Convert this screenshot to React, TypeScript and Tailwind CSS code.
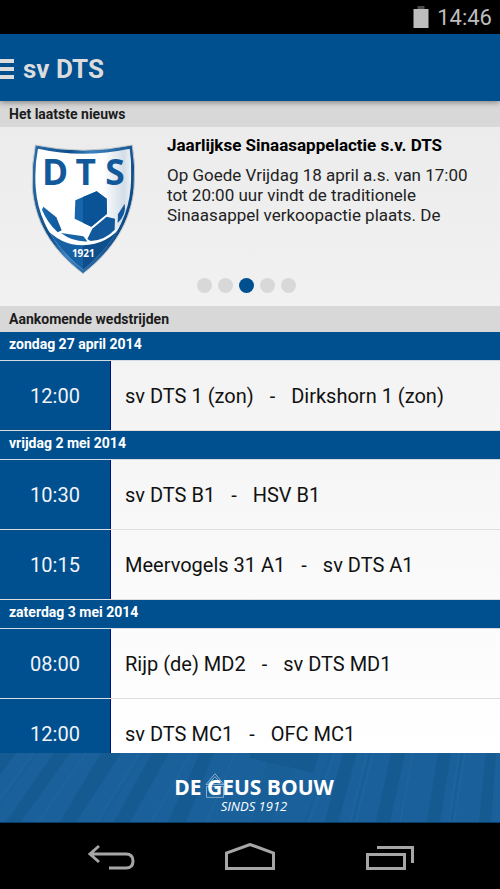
import React from "react";

type Match = { time: string; home: string; away: string };
type MatchDay = { date: string; matches: Match[] };

const days: MatchDay[] = [
  {
    date: "zondag 27 april 2014",
    matches: [{ time: "12:00", home: "sv DTS 1 (zon)", away: "Dirkshorn 1 (zon)" }],
  },
  {
    date: "vrijdag 2 mei 2014",
    matches: [
      { time: "10:30", home: "sv DTS B1", away: "HSV B1" },
      { time: "10:15", home: "Meervogels 31 A1", away: "sv DTS A1" },
    ],
  },
  {
    date: "zaterdag 3 mei 2014",
    matches: [
      { time: "08:00", home: "Rijp (de) MD2", away: "sv DTS MD1" },
      { time: "12:00", home: "sv DTS MC1", away: "OFC MC1" },
    ],
  },
];

function StatusBar() {
  return (
    <div className="flex h-[34px] shrink-0 items-end justify-end gap-2 bg-black pr-2 text-[#bebebe]">
      <svg width="16" height="24" viewBox="0 0 16 24" className="mb-1" aria-hidden="true">
        <rect x="4.500" y="0" width="7" height="3" fill="#4a4a4a" />
        <rect x="0.5" y="3" width="15" height="19" fill="#bebebe" />
      </svg>
      <span className="text-[22px] leading-8">14:46</span>
    </div>
  );
}

function Header() {
  return (
    <header className="z-10 flex h-[67px] shrink-0 items-center gap-2 bg-[#004f8f] pt-[2px] text-[#dcdcdc] shadow-[0_1px_6px_rgba(0,0,0,0.45)]">
      <button type="button" aria-label="Menu" className="flex w-[15px] flex-col gap-1">
        <span className="h-1 w-[14px] bg-current" />
        <span className="h-1 w-[14px] bg-current" />
        <span className="h-1 w-[14px] bg-current" />
      </button>
      <h1 className="text-[26px] leading-8 font-bold">sv DTS</h1>
    </header>
  );
}

function SectionTitle({ children }: { children: React.ReactNode }) {
  return (
    <h2 className="shrink-0 bg-[#d8d8d8] px-[9px] text-sm leading-[26px] font-bold text-[#1c1c1c]">
      {children}
    </h2>
  );
}

function ClubLogo() {
  return (
    <svg
      width="107"
      height="132"
      viewBox="60 39 321 396"
      role="img"
      aria-label="DTS 1921"
      className="shrink-0"
    >
      <defs>
        <linearGradient id="rim" x1="0" y1="0" x2="1" y2="0.3">
          <stop offset="0" stopColor="#2d6ea7" />
          <stop offset="0.35" stopColor="#0e4e8c" />
          <stop offset="0.55" stopColor="#3b83c0" />
          <stop offset="1" stopColor="#0d4a86" />
        </linearGradient>
        <linearGradient id="field" x1="0" y1="0" x2="1" y2="0">
          <stop offset="0" stopColor="#ffffff" />
          <stop offset="0.68" stopColor="#ffffff" />
          <stop offset="0.88" stopColor="#d3dde7" />
          <stop offset="1" stopColor="#ffffff" />
        </linearGradient>
        <linearGradient id="ball" x1="0" y1="0" x2="1" y2="0">
          <stop offset="0" stopColor="#1a6ab0" />
          <stop offset="1" stopColor="#0f5799" />
        </linearGradient>
        <clipPath id="inside">
          <path d="M84 56 Q218 86 359 56 Q367 110 362 172 C355 265 309 345 219 419 C127 344 83 265 77 172 Q73 110 84 56Z" />
        </clipPath>
      </defs>
      <path
        d="M76 45 Q218 76 367 45 Q378 110 372 174 C363 271 315 356 219 431 C119 355 74 269 67 174 Q64 107 76 45Z"
        fill="url(#rim)"
        stroke="#c5c8cb"
        strokeWidth="3"
      />
      <g clipPath="url(#inside)">
        <rect x="60" y="40" width="320" height="390" fill="url(#field)" />
        <path d="M103 286 Q151 343 219 343 Q290 342 337 282 L310 345 L219 425 L130 350Z" fill="#1661a4" />
        <path d="M219 343 Q290 342 337 282 L310 345 L219 425Z" fill="#0e4f8b" />
        <path d="M103 286 Q151 343 219 343 Q290 342 337 282" fill="none" stroke="#ffffff" strokeWidth="6" />
        <path d="M196 211 L260 184 L290 206 L291 251 L244 290 L194 266Z" fill="#1766ab" />
        <path d="M219 201 L260 184 L290 206 L291 251 L244 290 L219 278Z" fill="#0b5397" />
        <path d="M100 230 L139 262 L155 301 L143 307 Q112 278 96 239Z" fill="url(#ball)" />
        <path d="M247 296 L290 260 L315 266 L314 299 Q286 330 242 333 L232 327Z" fill="#12599c" />
        <path d="M153 309 L220 319 L232 334 Q188 336 153 309Z" fill="#1763a5" />
        <path d="M344 221 Q350 252 323 279 L324 253Z" fill="#12599c" />
      </g>
      <g fill="#12599c" fontFamily="'Open Sans', sans-serif" fontWeight="700" fontSize="106" textAnchor="middle">
        <text x="135" y="165">D</text>
        <text x="227" y="165">T</text>
        <text x="315" y="165">S</text>
      </g>
      <text
        x="220"
        y="382"
        fill="#ffffff"
        fontFamily="'Open Sans', sans-serif"
        fontWeight="700"
        fontSize="30"
        textAnchor="middle"
      >
        1921
      </text>
    </svg>
  );
}

function News() {
  const active = 2;
  return (
    <section className="flex h-[179px] shrink-0 flex-col">
      <article className="flex flex-1 gap-[30px] px-[30px] pt-2 text-black">
        <div className="pt-2">
          <ClubLogo />
        </div>
        <div className="flex-1">
          <h3 className="text-[17px] leading-5 font-bold">Jaarlijkse Sinaasappelactie s.v. DTS</h3>
          <p className="max-w-[310px] pt-[10px] text-[17px] leading-5 text-[#222]">
            Op Goede Vrijdag 18 april a.s. van 17:00 tot 20:00 uur vindt de traditionele Sinaasappel
            verkoopactie plaats. De
          </p>
        </div>
      </article>
      <div className="flex justify-center gap-[6px] pb-[13px] pr-2">
        {[0, 1, 2, 3, 4].map((i) => (
          <button
            key={i}
            type="button"
            aria-label={`Nieuwsbericht ${i + 1}`}
            className={i === active ? "size-[15px] rounded-full bg-[#004f8f]" : "size-[15px] rounded-full bg-[#d8d8d8]"}
          />
        ))}
      </div>
    </section>
  );
}

function MatchList() {
  return (
    <div className="min-h-0 flex-1 overflow-hidden">
      {days.map((day) => (
        <section key={day.date}>
          <h3 className="h-[29px] border-b border-[#d5dbe3] bg-[#004f8f] px-[9px] text-sm leading-6 font-bold text-white">
            {day.date}
          </h3>
          <ul>
            {day.matches.map((m) => (
              <li key={m.time} className="flex h-[70px] border-b border-[#dedede] text-xl">
                <time className="flex w-[111px] items-center justify-center border-r border-[#00107a] bg-[#004f8f] text-[#f0f4f8]">
                  {m.time}
                </time>
                <div className="flex items-center gap-4 pl-[14px] text-[#111]">
                  <span>{m.home}</span>
                  <span>-</span>
                  <span>{m.away}</span>
                </div>
              </li>
            ))}
          </ul>
        </section>
      ))}
    </div>
  );
}

function Sponsor() {
  return (
    <a
      href="#sponsor"
      aria-label="De Geus Bouw"
      className="relative flex h-[70px] shrink-0 flex-col items-center overflow-hidden border-b border-[#0a3d68] bg-[#1a619b] pt-[22px] pl-2 font-['Open_Sans',sans-serif] text-white"
    >
      <svg
        className="absolute inset-0 h-full w-full"
        viewBox="0 0 500 70"
        preserveAspectRatio="none"
        aria-hidden="true"
      >
        <g fill="#155a90">
          <path d="M0 0H16L0 22Z" />
          <path d="M54 0H70L21 70H6Z" />
          <path d="M101 0H121L76 70H60Z" />
          <path d="M152 0H169L130 70H114Z" />
          <path d="M200 0H214L186 70H168Z" />
          <path d="M250 0H319L313 20L250 5Z" />
          <path d="M268 8L293 17L270 70H252Z" opacity="0.3" />
          <path d="M343 0H357L338 70H325Z" />
          <path d="M391 0H405L390 70H376Z" />
          <path d="M438 0H451L440 70H427Z" />
          <path d="M486 0H496L491 70H479Z" />
        </g>
        <path
          d="M33 0L0 47M86 0L38 70M139 0L97 70M191 0L151 70M235 0L207 70M335 0L309 70M367 0L350 70M373 0L356 70M413 0L400 70M459 0L449 70M465 0L454 70"
          fill="none"
          stroke="#2a6da4"
          strokeOpacity="0.5"
        />
        <path
          d="M37 0L0 53M144 0L101 70M331 0L305 70M370 0L353 70M462 0L451 70"
          fill="none"
          stroke="#15588f"
          strokeOpacity="0.5"
        />
        <g fill="none" stroke="#9fc0da" strokeWidth="0.8">
          <path d="M206 32L215 21L224 32M206 32H224M206.500 34V45H223.500V34H206.500M208 32L215 24L222 32" />
        </g>
      </svg>
      <span className="relative text-[21px] leading-6 font-bold">DE GEUS BOUW</span>
      <span className="relative text-[13px] leading-[14px] italic">SINDS 1912</span>
    </a>
  );
}

function NavBar() {
  return (
    <nav className="flex h-[66px] shrink-0 items-center justify-center gap-[87px] bg-black pt-1 text-[#a6a6a6]">
      <button type="button" aria-label="Terug">
        <svg width="52" height="30" viewBox="0 0 52 30" fill="none" stroke="currentColor" strokeWidth="3">
          <path d="M14 3L5 11L14 19M5 11H41Q48 11 48 18Q48 25 41 25H24" />
        </svg>
      </button>
      <button type="button" aria-label="Startscherm">
        <svg width="52" height="30" viewBox="0 0 52 30" fill="none" stroke="currentColor" strokeWidth="3">
          <path d="M2.500 25.500V10L26 1.500L49.500 10V25.500Z" />
        </svg>
      </button>
      <button type="button" aria-label="Recente apps">
        <svg width="52" height="30" viewBox="0 0 52 30" fill="none" stroke="currentColor" strokeWidth="3">
          <path d="M4.500 11.500H41.500V25.500H4.500Z" />
          <path d="M14 4.500H49.500V20" />
        </svg>
      </button>
    </nav>
  );
}

export default function App() {
  return (
    <div className="flex h-screen flex-col overflow-hidden bg-black font-[Roboto,sans-serif]">
      <StatusBar />
      <Header />
      <main className="flex min-h-0 flex-1 flex-col bg-linear-to-b from-[#ebebeb] to-white">
        <SectionTitle>Het laatste nieuws</SectionTitle>
        <News />
        <SectionTitle>Aankomende wedstrijden</SectionTitle>
        <MatchList />
      </main>
      <Sponsor />
      <NavBar />
    </div>
  );
}
